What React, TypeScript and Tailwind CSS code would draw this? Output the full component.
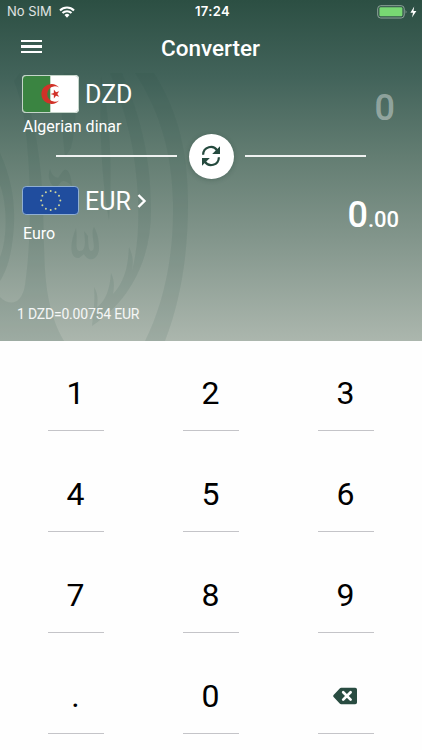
const KEYS = ['1', '2', '3', '4', '5', '6', '7', '8', '9', '.', '0', 'del'];

function StatusBar() {
  return (
    <div className="h-6 px-[7px] grid grid-cols-3 items-center font-['Inter',sans-serif] text-[13px]">
      <div className="flex items-center gap-[7px]">
        <span className="text-white/85">No SIM</span>
        <svg width="16" height="12" viewBox="0 0 16 12" fill="none" stroke="white" strokeWidth="2.1">
          <path d="M1 4.4a10 10 0 0 1 14 0" />
          <path d="M3.5 7.1a6.4 6.4 0 0 1 9 0" />
          <path d="M8 11.7L5.5 9.1a3.5 3.5 0 0 1 5 0z" fill="white" stroke="none" />
        </svg>
      </div>
      <span className="pl-[3px] text-center font-semibold tracking-[0.4px]">17:24</span>
      <div className="flex items-center justify-end -mr-[3px]">
        <svg width="41" height="14" viewBox="0 0 41 14">
          <rect x=".7" y=".7" width="26.5" height="12.3" rx="3" fill="none" stroke="#8fa59b" />
          <rect x="2.4" y="2.3" width="23" height="9" rx="1.2" fill="#78d873" />
          <path d="M28.6 4.8q1.8 2 0 4z" fill="#8fa59b" />
          <path d="M37.2 1.5L33.4 7.7h2.6L35 12.5 39.4 6h-2.9z" fill="white" />
        </svg>
      </div>
    </div>
  );
}

function Watermark() {
  return (
    <svg
      className="absolute left-0 bottom-0 pointer-events-none"
      width="200"
      height="268"
      viewBox="0 72 200 268"
      fill="#2c5145"
      fillOpacity="0.1"
    >
      <path d="M135 72H154C179 112 188 153 188 202C188 263 178 306 165 340H145C162 306 174 260 173 202C172 153 161 112 135 72Z" />
      <path d="M110 72H122C142 119 151 160 151 210C151 257 132 298 92 325C94 308 95 297 94 286C98 292 98 300 97 306C106 300 110 287 111 272C115 280 114 287 113 293C126 279 128 263 129 246C134 257 133 263 132 270C138 246 139 222 138 198C136 151 127 113 110 72Z" />
      <path d="M14 80L20 72C35 119 42 163 43 208C45 262 42 302 64 340H0V296C10 306 22 303 25 284C31 242 31 190 28 155C26 121 22 101 14 80Z" />
      <path d="M0 152C11 176 15 200 14 222C13 248 8 268 0 280V256C7 240 8 205 0 184Z" />
      <path d="M64 72H75C77 101 76 126 71 147L65 156C62 130 60 101 64 72Z" />
      <path d="M101 76C109 108 113 164 109 219C102 185 99 126 101 76Z" />
      <path d="M76 227C69 244 70 258 79 257L84 253C88 262 99 259 99 247C99 238 97 231 94 226C90 232 96 245 93 249C89 253 88 245 88 235L84 230C86 243 85 250 80 250C74 250 78 238 76 227Z" />
      <path d="M50 168C52 175 55 176 58 177L63 170C67 166 71 172 72 185C67 180 63 179 61 181L56 187C50 184 47 176 50 168Z" />
    </svg>
  );
}

function AlgeriaFlag() {
  return (
    <svg width="57" height="38" viewBox="0 0 57 38">
      <rect width="57" height="38" rx="4" fill="white" />
      <path d="M28.3 .5H4a3.5 3.5 0 0 0-3.5 3.5v30A3.5 3.5 0 0 0 4 37.5h24.3z" fill="#3a8441" />
      <rect x=".5" y=".5" width="56" height="37" rx="3.6" fill="none" stroke="#c5d5ca" />
      <path d="M37 12.5a10 10 0 1 0 0 13a7.7 7.7 0 1 1 0-13z" fill="#d13228" />
      <path d="M28.6 19l3.2-1.1.1-3.4 2.1 2.7 3.2-1-1.9 2.8 1.9 2.8-3.2-1-2.1 2.7-.1-3.4z" fill="#d13228" />
    </svg>
  );
}

function EuroFlag() {
  const stars = Array.from({ length: 12 }, (_, i) => (i * Math.PI) / 6);
  return (
    <svg width="57" height="29" viewBox="0 0 57 29">
      <rect x=".5" y=".5" width="56" height="28" rx="3.6" fill="#204d9e" stroke="#90afd2" />
      {stars.map((a, i) => (
        <circle key={i} cx={28.7 + 9.6 * Math.sin(a)} cy={14.5 - 9.6 * Math.cos(a)} r="1" fill="#cfd59a" />
      ))}
    </svg>
  );
}

function SwapDivider() {
  return (
    <div className="mx-[56px] h-[46px] flex items-center justify-between">
      <div className="w-[121px] h-[1.5px] bg-white/90" />
      <button className="size-[45px] rounded-full bg-white shadow-[0_1px_5px_rgba(30,60,50,0.3)] flex items-center justify-center">
        <svg width="20" height="22" viewBox="0 0 20 22" fill="none" stroke="#254a3e" strokeWidth="2.2">
          <path d="M2.1 9.8C2.3 1.6 12.3-.7 16.1 5.4" />
          <path d="M17.9 12.2C17.7 20.4 7.7 22.7 3.9 16.6" />
          <path d="M19 1.2V9h-7.8z" fill="#254a3e" stroke="none" />
          <path d="M1 20.8V13h7.8z" fill="#254a3e" stroke="none" />
        </svg>
      </button>
      <div className="w-[121px] h-[1.5px] bg-white/90" />
    </div>
  );
}

function DeleteIcon() {
  return (
    <svg width="25" height="18" viewBox="0 0 25 18">
      <path d="M8.2 .7H22.2Q24 .7 24 2.5V15.5Q24 17.3 22.2 17.3H8.2Q7.3 17.3 6.7 16.6L.6 10Q-.2 9 .6 8L6.7 1.4Q7.3 .7 8.2 .7Z" fill="#294c41" />
      <path d="M10.2 5.2l7.4 7.4m0-7.4l-7.4 7.4" stroke="white" strokeWidth="2.7" strokeLinecap="round" />
    </svg>
  );
}

export default function App() {
  return (
    <div className="w-[422px] h-[750px] overflow-hidden bg-[#fefefe] flex flex-col font-['Roboto',sans-serif]">
      <div className="relative h-[340.5px] shrink-0 text-white bg-[linear-gradient(180deg,#2c4f43_0px,#42635a_76px,#637d72_156px,#83968c_240px,#abb6ad_340px)]">
        <Watermark />
        <div className="relative">
          <StatusBar />

          <header className="h-12 px-[21px] grid grid-cols-[1fr_auto_1fr] items-center">
            <button className="w-[21px] flex flex-col gap-[3.5px] -mt-[3px]">
              <span className="h-[2.3px] bg-white" />
              <span className="h-[2.3px] bg-white" />
              <span className="h-[2.3px] bg-white" />
            </button>
            <h1 className="pt-[2px] pr-[1px] text-[22.5px] font-medium">Converter</h1>
          </header>

          {/* Source currency */}
          <div className="h-[61px] pt-[3px] pl-[22px] pr-[27px] flex justify-between">
            <div>
              <div className="flex items-center gap-[6px]">
                <AlgeriaFlag />
                <span className="pt-[2px] text-[25px] leading-[36px]">DZD</span>
              </div>
              <p className="pt-[2px] pl-[1px] text-[16px] leading-[24px]">Algerian dinar</p>
            </div>
            <span className="pt-[1px] text-[36px] leading-[64px] font-medium text-white/40">0</span>
          </div>

          <SwapDivider />

          {/* Target currency */}
          <div className="h-[121px] pt-[7px] pl-[22px] pr-[23px] flex justify-between">
            <div>
              <div className="flex items-center gap-[6px]">
                <EuroFlag />
                <span className="pt-[2px] text-[25px] leading-[27px]">EUR</span>
                <svg width="10" height="14" viewBox="0 0 10 14" fill="none" stroke="white" strokeWidth="2.4">
                  <path d="M1.5 1l6 6-6 6" />
                </svg>
              </div>
              <p className="mt-[7px] pl-[1px] text-[16px] leading-[24px]">Euro</p>
            </div>
            <p className="font-medium leading-[58px] text-[36px]">
              0<span className="text-[22px]">.00</span>
            </p>
          </div>

          <p className="pl-[17px] text-[14px] leading-[28px] tracking-[-0.2px] text-white/90">1 DZD=0.00754 EUR</p>
        </div>
      </div>

      <div className="pl-2 pr-[9px] grid grid-cols-3 text-[32px] text-black">
        {KEYS.map((key) => (
          <button key={key} className="h-[101px] pt-[15px] flex flex-col items-center">
            <span className="h-[74px] flex items-center justify-center">
              {key === 'del' ? <DeleteIcon /> : key}
            </span>
            <span className="w-[56px] h-[1.3px] bg-[#c4c4c8]" />
          </button>
        ))}
      </div>
    </div>
  );
}
